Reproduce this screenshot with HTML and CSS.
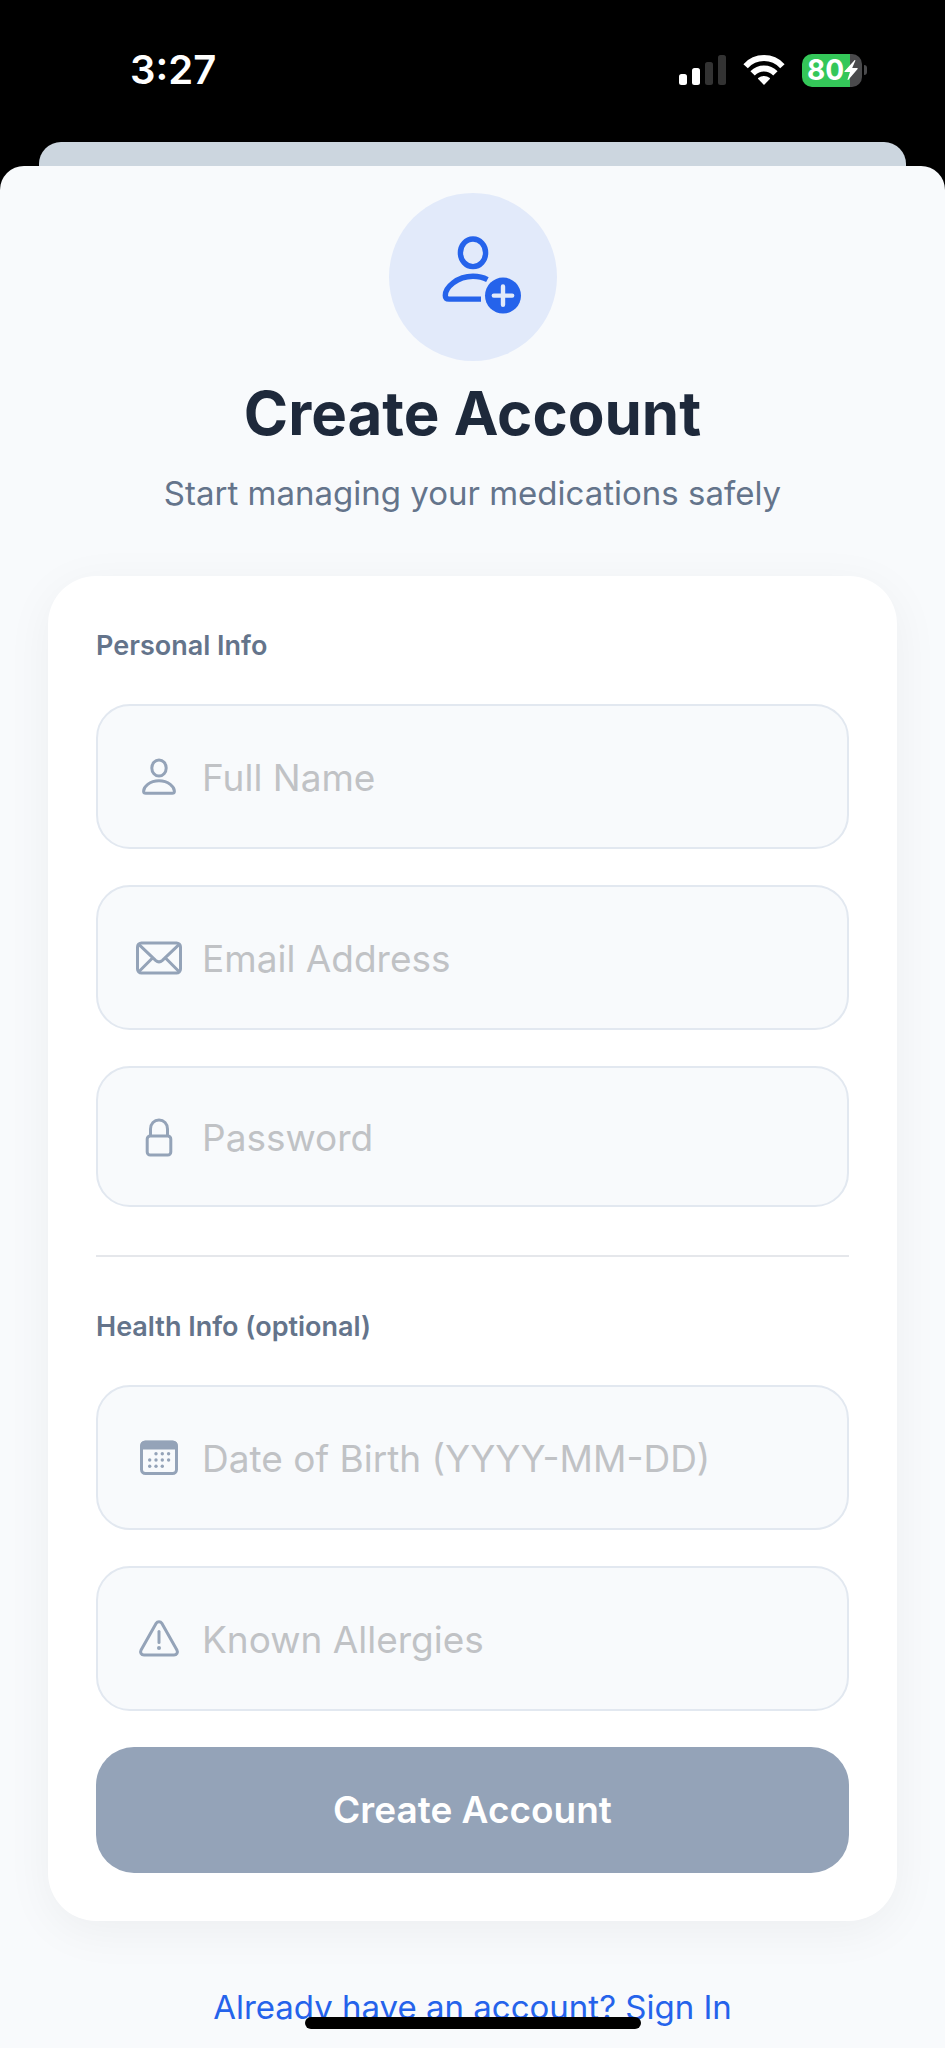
FILE: index.html
```html
<!DOCTYPE html>
<html lang="en">
<head>
<meta charset="utf-8">
<meta name="viewport" content="width=device-width, initial-scale=1">
<title>Create Account</title>
<link rel="stylesheet" href="styles.css">
</head>
<body>
<header class="status-bar">
  <time class="status-time">3:27</time>
  <div class="status-icons">
    <svg class="signal" viewBox="0 0 47 30" aria-hidden="true">
      <rect x="0" y="19" width="8" height="11" rx="2.5" fill="#fff"/>
      <rect x="13" y="13" width="8" height="17" rx="2.5" fill="#fff"/>
      <rect x="26" y="7" width="8" height="23" rx="2.5" fill="#333"/>
      <rect x="39" y="0" width="8" height="30" rx="2.5" fill="#333"/>
    </svg>
    <svg class="wifi" viewBox="0 0 42 30" aria-hidden="true">
      <g fill="none" stroke="#fff" stroke-width="6">
        <path d="M2.600 11.200C12.600 .4 29.400 .4 39.400 11.200"/>
        <path d="M9.600 18.400C16 11.700 26 11.700 32.400 18.400"/>
      </g>
      <path fill="#fff" d="M21 30l-5.800-6c-.3-.4-.3-.7 0-1 3.400-2.700 8.200-2.700 11.600 0 .3.300.3.600 0 1z"/>
    </svg>
    <div class="battery">
      <span class="battery-body">
        <span class="battery-level">80</span>
        <svg class="bolt" viewBox="0 0 14 20" aria-hidden="true"><path fill="#fff" d="M10.500 .2L.5 11.200c-.3.400-.1.800.4.800H6L3.600 19.300c-.2.600.4.900.8.400L13.600 9c.3-.4.1-.9-.4-.9H8.200L11.300.7c.2-.6-.4-.9-.8-.5z"/></svg>
      </span>
      <span class="battery-tip"></span>
    </div>
  </div>
</header>
<div class="sheet-behind"></div>
<main class="sheet">
  <div class="badge">
    <svg class="badge-icon" viewBox="-17 -5 96 96" aria-hidden="true">
      <g fill="none" stroke="#2563eb" stroke-width="5.4">
        <ellipse cx="31" cy="18.800" rx="12.600" ry="13.800"/>
        <path d="M45.400 45.600C41.500 43.500 36.500 42.300 31 42.300C15 42.300 3.300 53.500 3.300 61.500C3.300 64 4.800 65.100 7 65.100H39"/>
      </g>
      <circle cx="61" cy="61.600" r="18" fill="#2563eb"/>
      <path d="M61 52.400v18.400M51.800 61.600h18.400" fill="none" stroke="#e2eafa" stroke-width="4.400" stroke-linecap="round"/>
    </svg>
  </div>
  <h1 class="title">Create Account</h1>
  <p class="subtitle">Start managing your medications safely</p>

  <form class="card">
    <h2 class="section-title">Personal Info</h2>
    <label class="field">
      <svg class="field-icon" viewBox="0 0 46 46" aria-hidden="true">
        <ellipse cx="23" cy="14" rx="7.200" ry="8"/>
        <path d="M23 26.800C13.500 26.800 7.600 33 7.600 37.200C7.600 38.800 8.400 39.300 9.800 39.300H36.200C37.600 39.300 38.400 38.800 38.400 37.200C38.400 33 32.500 26.800 23 26.800Z"/>
      </svg>
      <input class="input" type="text" name="name" aria-label="Full Name" placeholder="Full Name">
    </label>
    <label class="field">
      <svg class="field-icon" viewBox="0 0 46 46" aria-hidden="true">
        <rect x="1.500" y="8" width="43" height="30" rx="4"/>
        <path d="M2.800 9.300L19.600 25.300C21.800 27.300 24.200 27.300 26.400 25.300L43.200 9.300M2.800 36.800L16.500 23M43.200 36.800L29.500 23"/>
      </svg>
      <input class="input" type="email" name="email" aria-label="Email Address" placeholder="Email Address">
    </label>
    <label class="field field-short">
      <svg class="field-icon" viewBox="0 0 46 46" aria-hidden="true">
        <rect x="11.200" y="22" width="23.600" height="19" rx="3"/>
        <path d="M14.500 22V15C14.500 9.500 18.200 6 23 6S31.500 9.500 31.500 15V22"/>
      </svg>
      <input class="input" type="password" name="password" aria-label="Password" placeholder="Password">
    </label>
    <hr class="divider">
    <h2 class="section-title">Health Info (optional)</h2>
    <label class="field">
      <svg class="field-icon" viewBox="0 0 46 46" aria-hidden="true">
        <rect x="5.500" y="7" width="35" height="31.500" rx="4"/>
        <path class="solid" d="M4.500 14.500V10C4.500 7.500 6.500 5.800 9 5.800H37C39.500 5.800 41.500 7.500 41.500 10V14.500Z"/>
        <g class="solid">
          <circle cx="20" cy="18.800" r="1.700"/><circle cx="26.300" cy="18.800" r="1.700"/><circle cx="32.600" cy="18.800" r="1.700"/>
          <circle cx="13.700" cy="25" r="1.700"/><circle cx="20" cy="25" r="1.700"/><circle cx="26.300" cy="25" r="1.700"/><circle cx="32.600" cy="25" r="1.700"/>
          <circle cx="13.700" cy="31.200" r="1.700"/><circle cx="20" cy="31.200" r="1.700"/><circle cx="26.300" cy="31.200" r="1.700"/>
        </g>
      </svg>
      <input class="input" type="text" name="birthdate" aria-label="Date of Birth" placeholder="Date of Birth (YYYY-MM-DD)">
    </label>
    <label class="field">
      <svg class="field-icon" viewBox="0 0 46 46" aria-hidden="true">
        <path d="M20.200 7.300C21.500 5.200 24.500 5.200 25.800 7.300L40.900 34C42.200 36.500 40.700 39 38 39H8C5.300 39 3.800 36.500 5.100 34Z"/>
        <path d="M23 15.500V26.500" stroke-linecap="round"/>
        <circle class="solid" cx="23" cy="32" r="2"/>
      </svg>
      <input class="input" type="text" name="allergies" aria-label="Known Allergies" placeholder="Known Allergies">
    </label>
    <button class="submit" type="submit">Create Account</button>
  </form>
  <a class="sign-in" href="#">Already have an account? Sign In</a>
</main>
<div class="home-indicator"></div>
</body>
</html>
```
FILE: styles.css
```css
* { box-sizing: border-box; }

body {
  margin: 0;
  min-height: 100vh;
  display: flex;
  flex-direction: column;
  background: #000;
  color: #1e293b;
  font-family: Inter, "Liberation Sans", sans-serif;
}

.status-bar {
  display: flex;
  justify-content: space-between;
  align-items: center;
  height: 142px;
  padding: 0 78px 2px 130px;
  color: #fff;
}

.status-time {
  font-size: 40px;
  font-weight: 600;
  line-height: 48px;
}

.status-icons {
  display: flex;
  align-items: center;
  gap: 17px;
}

.signal { width: 47px; height: 30px; }
.wifi { width: 42px; height: 30px; }

.battery {
  display: flex;
  align-items: center;
  gap: 2px;
}

.battery-body {
  display: flex;
  align-items: center;
  width: 60px;
  height: 33px;
  padding-left: 5px;
  border-radius: 10px;
  background: linear-gradient(90deg, #34c759 80%, #4a4a4c 80%);
}

.battery-level {
  font-size: 28px;
  font-weight: 700;
  line-height: 32px;
}

.bolt {
  flex: none;
  width: 14px;
  height: 20px;
}

.battery-tip {
  width: 3px;
  height: 10px;
  border-radius: 0 4px 4px 0;
  background: #4a4a4c;
}

.sheet-behind {
  height: 24px;
  margin: 0 39px;
  border-radius: 22px 22px 0 0;
  background: #ccd6df;
}

.sheet {
  flex: 1;
  display: flex;
  flex-direction: column;
  align-items: center;
  padding: 27px 48px 16px;
  border-radius: 24px 24px 0 0;
  background: #f8fafc;
}

.badge {
  display: flex;
  justify-content: center;
  align-items: center;
  width: 168px;
  height: 168px;
  border-radius: 50%;
  background: #e2eafa;
}

.badge-icon { width: 96px; height: 96px; }

.title {
  margin: 16px 0 0;
  font-size: 60px;
  font-weight: 700;
  line-height: 72px;
}

.subtitle {
  margin: 22px 0 0;
  color: #64748b;
  font-size: 33px;
  line-height: 44px;
}

.card {
  display: flex;
  flex-direction: column;
  gap: 36px;
  width: 100%;
  margin: 61px 0 64px;
  padding: 48px;
  border-radius: 48px;
  background: #fff;
  box-shadow: 0 10px 48px rgba(0, 0, 0, 0.05);
}

.section-title {
  margin: 0;
  color: #64748b;
  font-size: 27px;
  font-weight: 600;
  line-height: 44px;
}

.field {
  display: flex;
  align-items: center;
  gap: 20px;
  height: 145px;
  padding: 0 38px;
  border: 2px solid #e2e8f0;
  border-radius: 34px;
  background: #f8fafc;
}

.field-short { height: 141px; }

.field-icon {
  flex: none;
  width: 46px;
  height: 46px;
  fill: none;
  stroke: #94a3b8;
  stroke-width: 3;
  stroke-linejoin: round;
}

.field-icon .solid {
  fill: #94a3b8;
  stroke: none;
}

.input {
  flex: 1;
  min-width: 0;
  padding: 2px 0 0;
  border: 0;
  outline: 0;
  background: none;
  color: #1e293b;
  font: 400 37px/48px Inter, "Liberation Sans", sans-serif;
}

.input::placeholder {
  color: #c0c2c5;
  opacity: 1;
}

.divider {
  width: 100%;
  height: 2px;
  margin: 12px 0;
  border: 0;
  background: #e5e7eb;
}

.submit {
  height: 126px;
  border: 0;
  border-radius: 38px;
  background: #94a3b8;
  color: #fff;
  font: 600 37px/48px Inter, "Liberation Sans", sans-serif;
}

.sign-in {
  color: #2563eb;
  font-size: 33px;
  line-height: 44px;
  text-decoration: none;
}

.home-indicator {
  position: fixed;
  bottom: 19px;
  left: 50%;
  width: 336px;
  height: 12px;
  margin-left: -168px;
  border-radius: 6px;
  background: #000;
}
```
